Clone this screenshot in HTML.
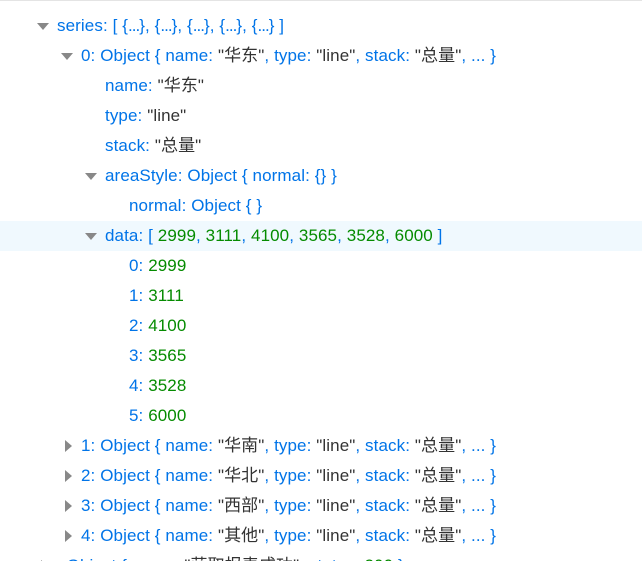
<!DOCTYPE html>
<html><head><meta charset="utf-8"><style>
html,body{margin:0;padding:0;background:#fff;width:642px;height:561px;overflow:hidden}
body{font-family:"Liberation Sans","Noto Sans CJK SC",sans-serif;font-size:17px;letter-spacing:0.1px;border-top:1px solid #e4e4e4;box-sizing:border-box;position:relative}
.r{position:absolute;left:0;right:0;height:30px;line-height:30px;white-space:nowrap}
.b{color:#0074e8}.g{color:#333}.n{color:#058b00}
.t{position:absolute;top:0;width:0;height:0}
.d{border-left:6px solid transparent;border-right:6px solid transparent;border-top:7px solid #888;top:12px}
.c{border-top:6px solid transparent;border-bottom:6px solid transparent;border-left:7px solid #888;top:9px}
.hl{background:#f0f9fe}
.e{letter-spacing:-1px}
</style></head><body>
<div class="r" style="top:10px"><span class="t d" style="left:37px"></span><span style="position:absolute;left:57px"><span class="b">series: [ {<span class="e">...</span>}, {<span class="e">...</span>}, {<span class="e">...</span>}, {<span class="e">...</span>}, {<span class="e">...</span>} ]</span></span></div>
<div class="r" style="top:40px"><span class="t d" style="left:61px"></span><span style="position:absolute;left:81px" class="b">0: Object { name: <span class="g">"华东"</span>, type: <span class="g">"line"</span>, stack: <span class="g">"总量"</span>, ... }</span></div>
<div class="r" style="top:70px"><span style="position:absolute;left:105px" class="b">name: <span class="g">"华东"</span></span></div>
<div class="r" style="top:100px"><span style="position:absolute;left:105px" class="b">type: <span class="g">"line"</span></span></div>
<div class="r" style="top:130px"><span style="position:absolute;left:105px" class="b">stack: <span class="g">"总量"</span></span></div>
<div class="r" style="top:160px"><span class="t d" style="left:85px"></span><span style="position:absolute;left:105px" class="b">areaStyle: Object { normal: {} }</span></div>
<div class="r" style="top:190px"><span style="position:absolute;left:129px" class="b">normal: Object {  }</span></div>
<div class="r hl" style="top:220px"><span class="t d" style="left:85px"></span><span style="position:absolute;left:105px" class="b">data: [ <span class="n">2999</span>, <span class="n">3111</span>, <span class="n">4100</span>, <span class="n">3565</span>, <span class="n">3528</span>, <span class="n">6000</span> ]</span></div>
<div class="r" style="top:250px"><span style="position:absolute;left:129px" class="b">0: <span class="n">2999</span></span></div>
<div class="r" style="top:280px"><span style="position:absolute;left:129px" class="b">1: <span class="n">3111</span></span></div>
<div class="r" style="top:310px"><span style="position:absolute;left:129px" class="b">2: <span class="n">4100</span></span></div>
<div class="r" style="top:340px"><span style="position:absolute;left:129px" class="b">3: <span class="n">3565</span></span></div>
<div class="r" style="top:370px"><span style="position:absolute;left:129px" class="b">4: <span class="n">3528</span></span></div>
<div class="r" style="top:400px"><span style="position:absolute;left:129px" class="b">5: <span class="n">6000</span></span></div>
<div class="r" style="top:430px"><span class="t c" style="left:65px"></span><span style="position:absolute;left:81px" class="b">1: Object { name: <span class="g">"华南"</span>, type: <span class="g">"line"</span>, stack: <span class="g">"总量"</span>, ... }</span></div>
<div class="r" style="top:460px"><span class="t c" style="left:65px"></span><span style="position:absolute;left:81px" class="b">2: Object { name: <span class="g">"华北"</span>, type: <span class="g">"line"</span>, stack: <span class="g">"总量"</span>, ... }</span></div>
<div class="r" style="top:490px"><span class="t c" style="left:65px"></span><span style="position:absolute;left:81px" class="b">3: Object { name: <span class="g">"西部"</span>, type: <span class="g">"line"</span>, stack: <span class="g">"总量"</span>, ... }</span></div>
<div class="r" style="top:520px"><span class="t c" style="left:65px"></span><span style="position:absolute;left:81px" class="b">4: Object { name: <span class="g">"其他"</span>, type: <span class="g">"line"</span>, stack: <span class="g">"总量"</span>, ... }</span></div>
<div class="r" style="top:550px"><span class="t c" style="left:41px"></span><span style="position:absolute;left:57px" class="b">: Object { name: <span class="g">"获取报表成功"</span>, status: <span class="n">200</span> }</span></div>
</body></html>
